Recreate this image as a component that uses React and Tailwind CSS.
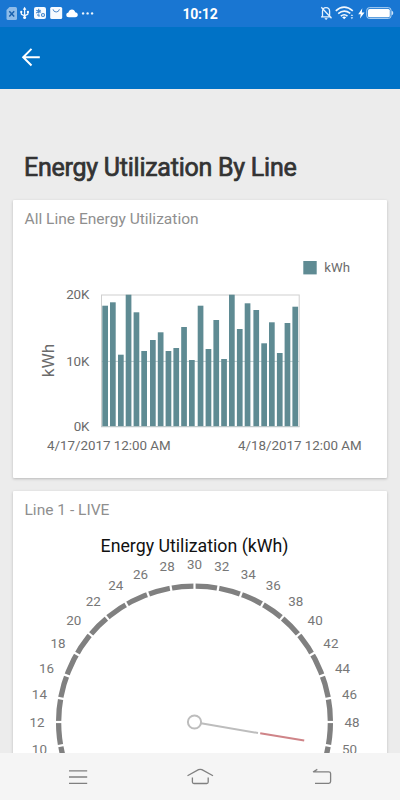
const bars = [
  [102.3, 305.7], [110, 302.3], [118, 354.7], [125.7, 294.7], [133.6, 312.3],
  [141.3, 351], [150, 340], [157.8, 332.3], [165.6, 351], [173.4, 348],
  [181.2, 327], [189, 360], [197.7, 305.7], [205.6, 349], [213.4, 320],
  [221.2, 359], [229, 294.7], [236.9, 329], [244.7, 303.3], [253.4, 310],
  [261.3, 343.3], [269, 322.3], [276.9, 353], [284.6, 323], [292.4, 306.7],
]

const gaugeLabels = Array.from({ length: 21 }, (_, i) => 10 + i * 2)

const CX = 194.5
const CY = 722

// 12 sits on the left of the dial and 48 on the right, 5 degrees per unit
function polar(value, radius) {
  const a = ((180 + (value - 12) * 5) * Math.PI) / 180
  return [CX + radius * Math.cos(a), CY + radius * Math.sin(a)]
}

function StatusBar() {
  return (
    <div className="flex h-[27px] shrink-0 items-center bg-[#1976d2] text-white">
      <svg className="h-[27px] w-[100px]" viewBox="0 0 100 27">
        {/* sim */}
        <path d="M9.5 7H15.5Q17 7 17 8.5V18.5Q17 20 15.5 20H8Q6.5 20 6.5 18.5V10Z" fill="#8fbce9" />
        <path d="M9.3 11.2L14.2 16.5M14.2 11.2L9.3 16.5" stroke="#1b62ae" strokeWidth="1.5" />
        {/* usb */}
        <g fill="none" stroke="#f2f8fe" strokeWidth="1.3">
          <path d="M24.6 9V17M21.3 11.8V13.4Q21.3 14.3 22.2 14.7L24.6 15.8L27 14.7Q27.9 14.3 27.9 13.4V11.8" />
        </g>
        <path d="M24.6 6.8L26.4 9.8H22.8Z" fill="#fff" />
        <circle cx="24.6" cy="17.6" r="1.5" fill="#fff" />
        <circle cx="21.3" cy="11.9" r="1.1" fill="#fff" />
        <rect x="26.9" y="10.9" width="2" height="2" fill="#fff" />
        {/* app */}
        <rect x="34" y="7" width="12" height="12" rx="2" fill="#f5faff" />
        <g fill="none" stroke="#3f83cb" strokeWidth="1.1">
          <path d="M38.7 8.8V13.5M36.3 10.3L41 12.2M36.3 13L40.7 10.1M39 14.5V16.8" />
          <circle cx="43" cy="15" r="1.5" />
          <path d="M37 15H39" />
        </g>
        {/* store */}
        <rect x="50.2" y="7" width="12" height="12" rx="1.5" fill="#f5faff" />
        <path d="M53 9.3Q53.6 12 56.2 12Q58.8 12 59.4 9.3" fill="none" stroke="#4b87c9" strokeWidth="1" />
        {/* cloud */}
        <path d="M68.8 17.2Q66.2 17 66.2 14.9Q66.2 12.9 68.4 12.6Q69.2 9.4 72 9.4Q74.5 9.4 75.3 12.3Q77.8 12.5 77.8 14.8Q77.8 17.2 75.2 17.2Z" fill="#fff" />
        <circle cx="83.1" cy="13.4" r="1.2" fill="#edf6fe" />
        <circle cx="87.6" cy="13.4" r="1.2" fill="#edf6fe" />
        <circle cx="92.1" cy="13.4" r="1.2" fill="#edf6fe" />
      </svg>
      <span className="w-[200px] pt-px text-center text-sm font-bold tracking-[-0.2px]">10:12</span>
      <svg className="h-[27px] w-[100px]" viewBox="300 0 100 27">
        {/* muted bell */}
        <g fill="none" stroke="#e6f2fd" strokeWidth="1.3">
          <path d="M322.5 16.8V11.5Q322.5 7.6 326 7.6Q329.6 7.6 329.6 11.5V16.8M321 16.9H331.2M321.3 7.3L331.5 18.3" />
        </g>
        <path d="M324.4 18.2H327.8L326.1 19.9Z" fill="#fff" />
        {/* wifi */}
        <g fill="none" stroke="#f2f8fe" strokeWidth="1.6">
          <path d="M335.8 10.8Q344 3.6 352.8 10.8M338.2 13.6Q344 8.7 350.3 13.4M340.8 16.2Q344.2 13.3 347.5 16.2" />
        </g>
        <path d="M342.2 17.2Q344.2 15.7 346.2 17.2L344.2 19.3Z" fill="#fff" />
        <path d="M351.9 14.3L353.2 16.1H350.6ZM350.6 17.3H353.2L351.9 19.2Z" fill="#cfe4f8" />
        {/* charging battery */}
        <path d="M362.3 8.3L358.2 14.2H360.7L360 18.5L364.5 12.5H361.8Z" fill="#fff" />
        <rect x="366.8" y="7.7" width="24.2" height="10.7" rx="2.5" fill="none" stroke="#b9d8f5" strokeWidth="1" />
        <rect x="368" y="9" width="21.8" height="8.2" rx="1.5" fill="#fff" />
        <path d="M391.7 10.8Q393.3 11.2 393.3 13Q393.3 14.9 391.7 15.3Z" fill="#cfe4f8" />
      </svg>
    </div>
  )
}

function Header() {
  return (
    <header className="h-[62px] shrink-0 bg-[#0072c6] pt-[20px] pl-[20px]">
      <svg className="h-5 w-[22px]" viewBox="20 47 22 20" fill="none" stroke="#fff" strokeWidth="2">
        <path d="M39.8 57.2H23M31.5 48.9L23.2 57.2L31.5 65.5" />
      </svg>
    </header>
  )
}

function Card({ title, children, className = '' }) {
  return (
    <section className={`shrink-0 overflow-hidden rounded-[1px] bg-white shadow-[0_1px_3px_rgba(0,0,0,0.22)] ${className}`}>
      <h2 className="h-[38px] pt-[9px] pl-[11.5px] text-[15.55px] leading-5 text-[#8f8f8f]">{title}</h2>
      {children}
    </section>
  )
}

function BarChart() {
  return (
    <svg className="block h-[240px] w-[374px]" viewBox="13 238 374 240" fill="#6b6b6b" fontSize="13.35">
      <rect x="303.3" y="261" width="13.4" height="13.4" fill="#5f8b93" />
      <text x="324.3" y="272.4" fontSize="13.2">kWh</text>

      <g fill="none" stroke="#cfcfcf">
        <rect x="101.5" y="295" width="197.7" height="131.6" />
        <path d="M101.5 361.4H299.2" stroke="#bccccf" />
      </g>
      {bars.map(([x, y]) => (
        <rect key={x} x={x} y={y} width="5.7" height={426.6 - y} fill="#5f8b93" />
      ))}
      <path d="M101 426.7H299.5" stroke="#c0cacc" />

      <g textAnchor="end">
        <text x="89.5" y="299.3">20K</text>
        <text x="89.5" y="366">10K</text>
        <text x="89.5" y="431.4">0K</text>
      </g>
      <text transform="translate(54.3 360.5) rotate(-90)" textAnchor="middle" fontSize="17.3">kWh</text>
      <text x="47" y="450.4">4/17/2017 12:00 AM</text>
      <text x="238" y="450.4">4/18/2017 12:00 AM</text>
    </svg>
  )
}

function Gauge() {
  return (
    <svg className="block h-[360px] w-[374px]" viewBox="13 529 374 360">
      <text x="194.5" y="552.3" textAnchor="middle" fontSize="17.75" fill="#111">
        Energy Utilization (kWh)
      </text>
      <circle cx={CX} cy={CY} r="135.9" fill="none" stroke="#808080" strokeWidth="5.3" />
      {gaugeLabels.map((v) => {
        const [x1, y1] = polar(v, 132)
        const [x2, y2] = polar(v, 140)
        const [tx, ty] = polar(v, 157.5)
        return (
          <g key={v}>
            <path d={`M${x1} ${y1}L${x2} ${y2}`} stroke="#fff" strokeWidth="2.2" />
            <text x={tx} y={ty + 4.6} textAnchor="middle" fontSize="13.4" fill="#777">{v}</text>
          </g>
        )
      })}
      <path d="M201 723.3L258 733" stroke="#bdbdbd" strokeWidth="2" />
      <path d="M260.2 733.3L304.2 740.6" stroke="#cf8488" strokeWidth="2" />
      <circle cx={CX} cy={CY} r="6.6" fill="#fff" stroke="#bdbdbd" strokeWidth="2" />
    </svg>
  )
}

function NavBar() {
  return (
    <nav className="h-[47px] shrink-0 bg-[#f5f5f5]">
      <svg className="block h-[47px] w-[400px]" viewBox="0 753 400 47" fill="none" stroke="#808080" strokeWidth="1.3">
        <path d="M69 770.8H87.2M69 777H87.2M69 783.3H87.2" />
        <path d="M187.5 775.7L198.5 769.7Q200.2 768.9 201.9 769.7L213 775.7M192.4 777.5V782Q192.4 783.5 193.9 783.5H206.7Q208.2 783.5 208.2 782V777.5" />
        <path d="M313.4 771.8H328.8Q330.6 771.8 330.6 773.6V781.5Q330.6 783.3 328.8 783.3H315M313 772L317.3 769.4" />
      </svg>
    </nav>
  )
}

export default function App() {
  return (
    <div className="flex h-[800px] w-[400px] flex-col overflow-hidden bg-[#ececec] font-['Roboto',sans-serif]">
      <StatusBar />
      <Header />
      <main className="flex min-h-0 flex-1 flex-col overflow-hidden px-[13px]">
        <h1 className="h-[111px] shrink-0 pt-[63px] pl-[11px] text-[25px] leading-8 tracking-[-0.25px] whitespace-nowrap text-[#333] [-webkit-text-stroke:0.7px_#333]">
          Energy Utilization By Line
        </h1>
        <Card title="All Line Energy Utilization" className="mb-[13px] h-[278px]">
          <BarChart />
        </Card>
        <Card title="Line 1 - LIVE">
          <Gauge />
        </Card>
      </main>
      <NavBar />
    </div>
  )
}
